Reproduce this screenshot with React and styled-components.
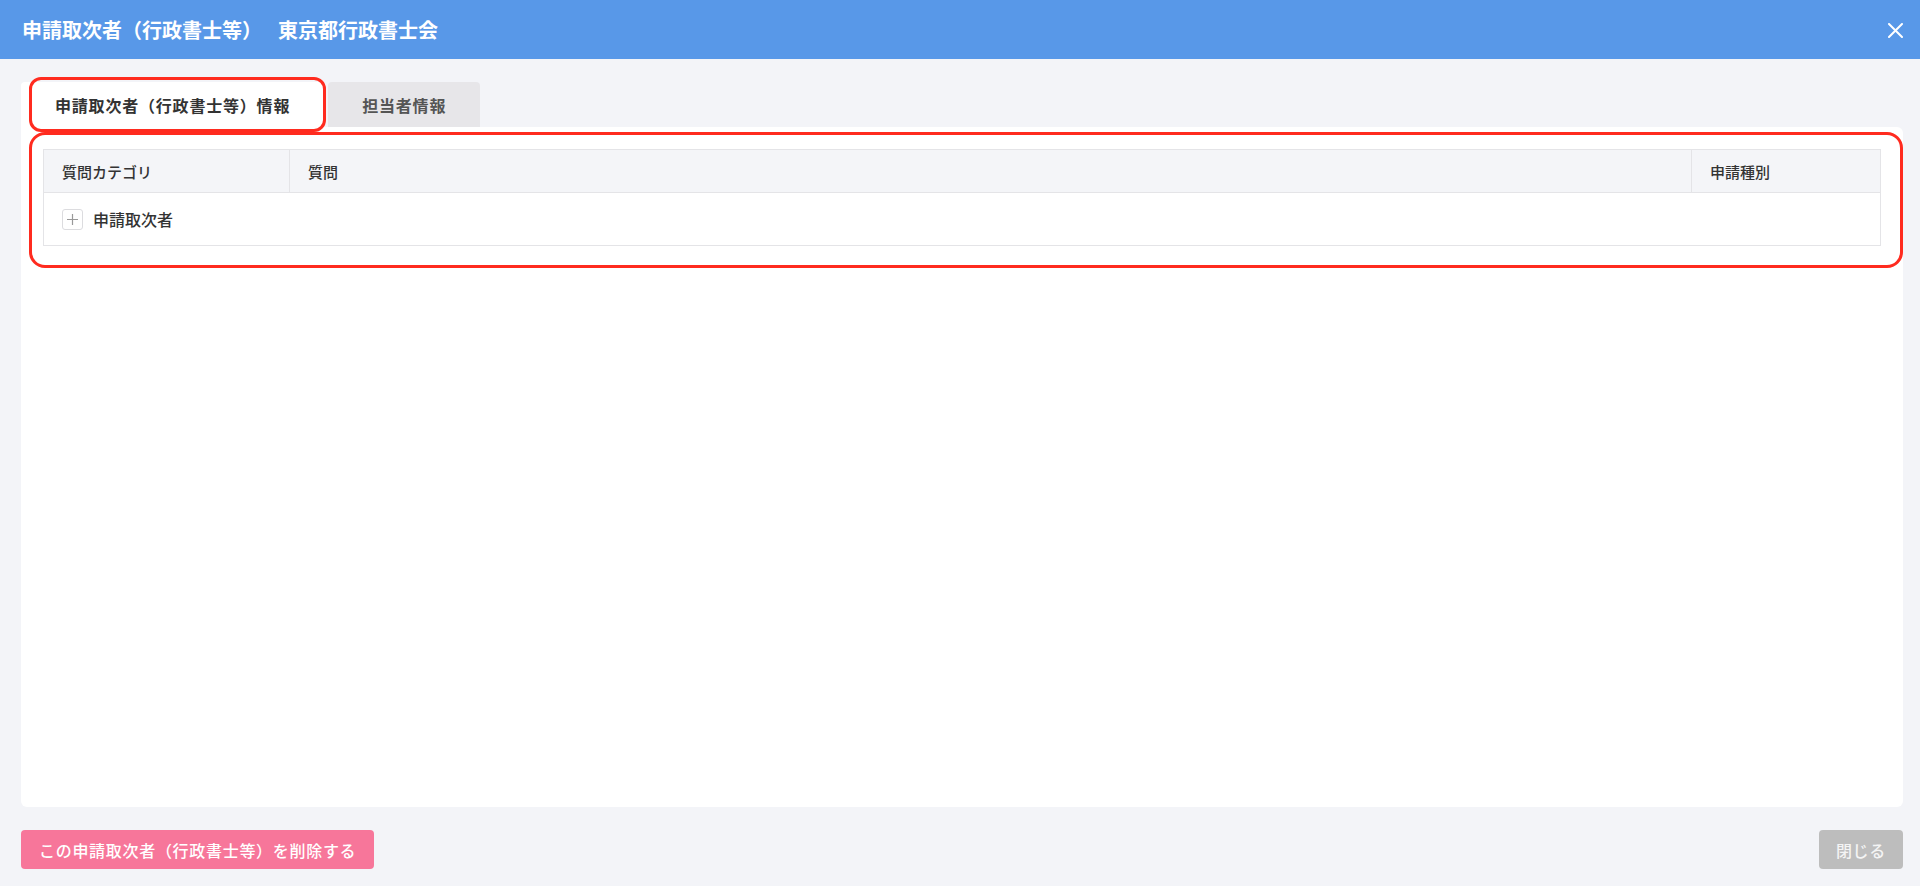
import React from 'react';
import styled, { createGlobalStyle } from 'styled-components';

const GlobalStyle = createGlobalStyle`
  body {
    margin: 0;
    background: #f3f4f8;
    font-family: "Noto Sans CJK JP", "Noto Sans", sans-serif;
    color: #333;
  }
`;

const Page = styled.div`
  width: 1920px;
  height: 886px;
  display: flex;
  flex-direction: column;
`;

const Header = styled.header`
  height: 59px;
  background: #5898e8;
  display: flex;
  align-items: center;
  justify-content: space-between;
  padding: 0 17px 0 22px;
  box-sizing: border-box;
`;

const Title = styled.h1`
  margin: 0;
  font-size: 20px;
  font-weight: 700;
  color: #fff;
  display: flex;
  gap: 16px;
`;

const CloseButton = styled.button`
  width: 16px;
  height: 16px;
  padding: 0;
  border: none;
  background: none;
  display: flex;
  align-items: center;
  justify-content: center;
  margin-top: 1px;
`;

const Main = styled.main`
  padding: 23px 17px 0 21px;
`;

const Tabs = styled.div`
  display: flex;
  gap: 4px;
`;

const Tab = styled.div`
  position: relative;
  height: 45px;
  padding: 0 34px;
  display: flex;
  align-items: center;
  font-size: 16px;
  font-weight: 700;
  letter-spacing: 0.8px;
  border-radius: 4px 4px 0 0;
  background: ${(p) => (p.$active ? '#fff' : '#e7e6e9')};
  color: ${(p) => (p.$active ? '#333' : '#555')};
`;

const Highlight = styled.div`
  position: absolute;
  top: ${(p) => p.$top}px;
  left: ${(p) => p.$left}px;
  right: ${(p) => p.$right}px;
  bottom: ${(p) => p.$bottom}px;
  border: 3.5px solid #ff2b1f;
  border-radius: ${(p) => p.$radius}px;
  pointer-events: none;
`;

const Panel = styled.section`
  background: #fff;
  height: 680px;
  box-sizing: border-box;
  padding: 22px;
  border-radius: 0 6px 6px 6px;
`;

const TableWrap = styled.div`
  position: relative;
`;

const Table = styled.table`
  width: 100%;
  border-collapse: collapse;
  table-layout: fixed;
`;

const HeadCell = styled.th`
  height: 42px;
  padding: 0 18px;
  text-align: left;
  font-size: 15px;
  font-weight: 500;
  color: #333;
  background: #f4f5f8;
  border: 1px solid #e4e4e7;
`;

const Cell = styled.td`
  height: 52px;
  padding: 0 18px;
  border: 1px solid #e4e4e7;
  font-size: 16px;
  font-weight: 500;
  color: #333;
`;

const Category = styled.div`
  display: flex;
  align-items: center;
  gap: 10px;
`;

const ExpandBox = styled.span`
  width: 19px;
  height: 19px;
  border: 1px solid #dcdcdf;
  border-radius: 3px;
  display: flex;
  align-items: center;
  justify-content: center;
  background: #fff;
`;

const Footer = styled.footer`
  display: flex;
  justify-content: space-between;
  padding: 23px 17px 0 21px;
`;

const Button = styled.button`
  height: 39px;
  padding: 0 ${(p) => (p.$danger ? 18 : 17)}px;
  border: none;
  border-radius: 4px;
  font-family: inherit;
  font-size: 16px;
  font-weight: 500;
  letter-spacing: 0.7px;
  background: ${(p) => (p.$danger ? '#f7769a' : '#bdbdbd')};
  color: ${(p) => (p.$danger ? '#fff' : '#f4f4f4')};
`;

const CloseIcon = () => (
  <svg width="15" height="15" viewBox="0 0 15 15">
    <path d="M1 1L14 14M14 1L1 14" stroke="#fff" strokeWidth="2" strokeLinecap="round" />
  </svg>
);

const PlusIcon = () => (
  <svg width="11" height="11" viewBox="0 0 11 11">
    <path d="M5.5 0V11M0 5.5H11" stroke="#999" strokeWidth="1.2" />
  </svg>
);

export default function App() {
  return (
    <Page>
      <GlobalStyle />
      <Header>
        <Title>
          <span>申請取次者（行政書士等）</span>
          <span>東京都行政書士会</span>
        </Title>
        <CloseButton>
          <CloseIcon />
        </CloseButton>
      </Header>
      <Main>
        <Tabs>
          <Tab $active>
            申請取次者（行政書士等）情報
            <Highlight $top={-5} $left={8} $right={-2} $bottom={-5} $radius={12} />
          </Tab>
          <Tab>担当者情報</Tab>
        </Tabs>
        <Panel>
          <TableWrap>
            <Table>
              <colgroup>
                <col style={{ width: 246 }} />
                <col />
                <col style={{ width: 189 }} />
              </colgroup>
              <thead>
                <tr>
                  <HeadCell>質問カテゴリ</HeadCell>
                  <HeadCell>質問</HeadCell>
                  <HeadCell>申請種別</HeadCell>
                </tr>
              </thead>
              <tbody>
                <tr>
                  <Cell colSpan={3}>
                    <Category>
                      <ExpandBox>
                        <PlusIcon />
                      </ExpandBox>
                      申請取次者
                    </Category>
                  </Cell>
                </tr>
              </tbody>
            </Table>
            <Highlight $top={-17} $left={-14} $right={-22} $bottom={-22} $radius={16} />
          </TableWrap>
        </Panel>
      </Main>
      <Footer>
        <Button $danger>この申請取次者（行政書士等）を削除する</Button>
        <Button>閉じる</Button>
      </Footer>
    </Page>
  );
}
